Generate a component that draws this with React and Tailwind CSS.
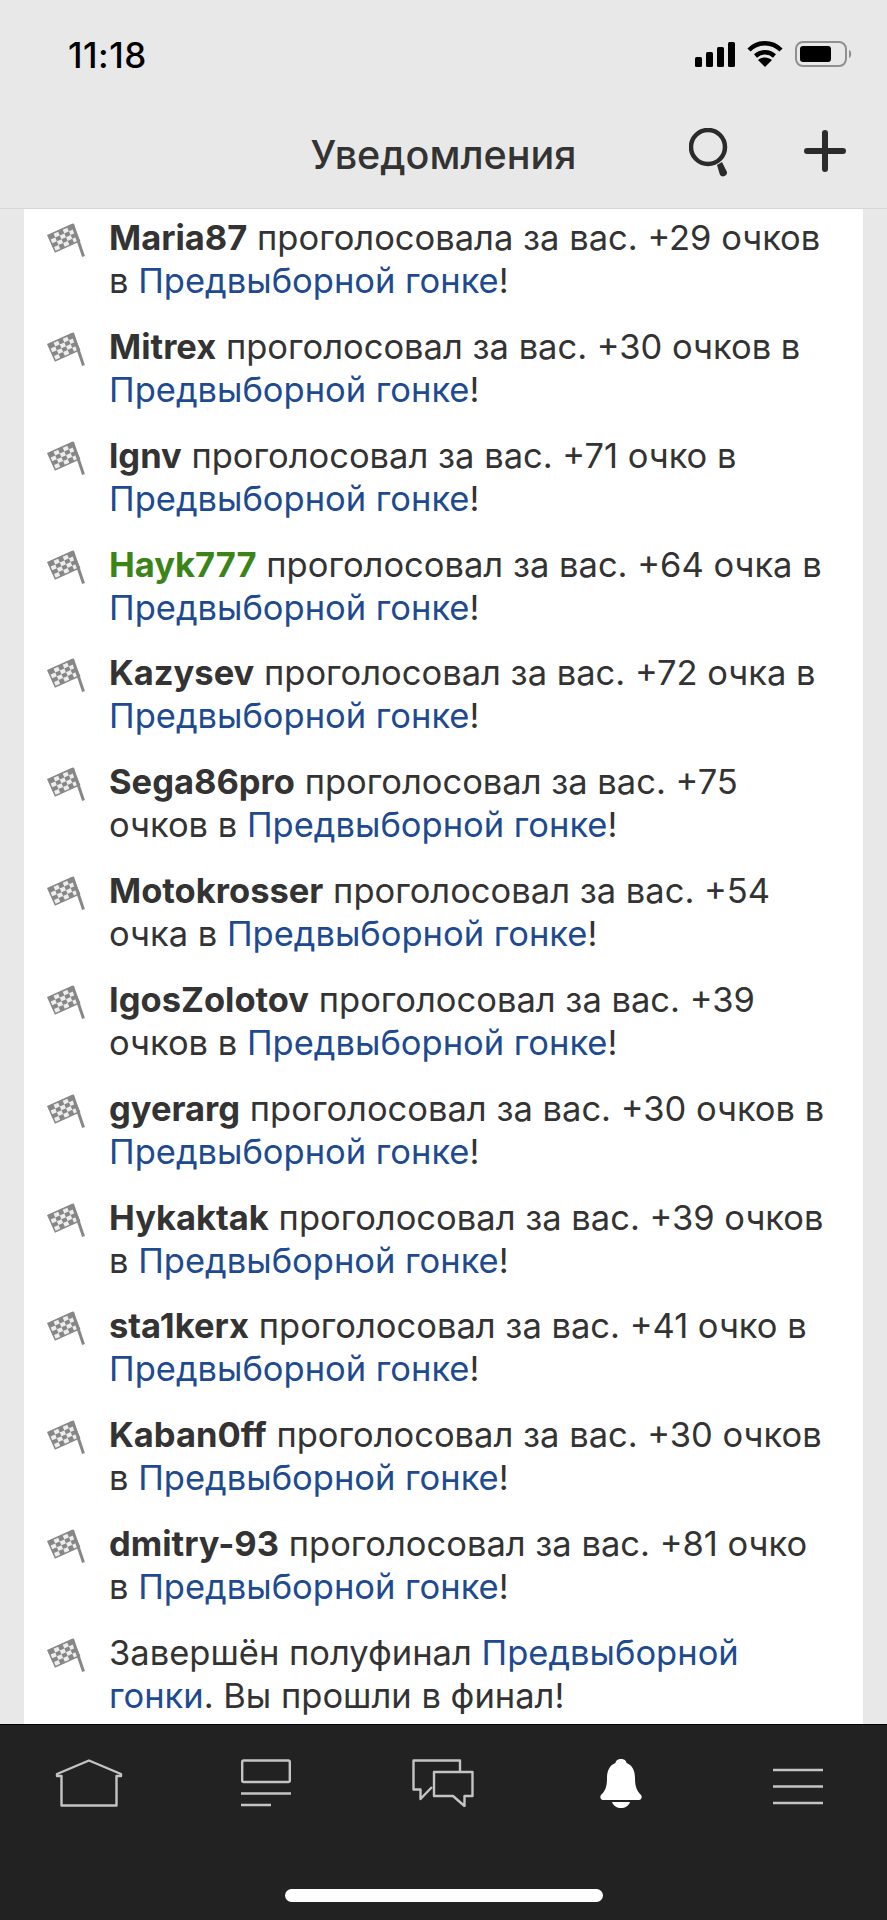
import React from "react";

const rows = [
  { name: "Maria87", text: " проголосовала за вас. +29 очков в " },
  { name: "Mitrex", text: " проголосовал за вас. +30 очков в " },
  { name: "lgnv", text: " проголосовал за вас. +71 очко в " },
  { name: "Hayk777", text: " проголосовал за вас. +64 очка в ", green: true },
  { name: "Kazysev", text: " проголосовал за вас. +72 очка в " },
  { name: "Sega86pro", text: " проголосовал за вас. +75 очков в " },
  { name: "Motokrosser", text: " проголосовал за вас. +54 очка в " },
  { name: "IgosZolotov", text: " проголосовал за вас. +39 очков в " },
  { name: "gyerarg", text: " проголосовал за вас. +30 очков в " },
  { name: "Hykaktak", text: " проголосовал за вас. +39 очков в " },
  { name: "sta1kerx", text: " проголосовал за вас. +41 очко в " },
  { name: "Kaban0ff", text: " проголосовал за вас. +30 очков в " },
  { name: "dmitry-93", text: " проголосовал за вас. +81 очко в " },
];

const Flag = () => {
  const cells = [];
  for (let y = 0; y < 4; y++) {
    for (let x = 0; x < 5; x++) {
      if ((x + y) % 2 === 1) {
        cells.push(<rect key={x + "-" + y} x={1.5 + x * 5} y={1.5 + y * 4.1} width="5" height="4.1" fill="#fff" opacity="0.85" />);
      }
    }
  }
  return (
    <svg width="38" height="36" viewBox="0 0 38 36" className="shrink-0">
      <g transform="translate(0 12) rotate(-24)">
        <rect x="0" y="0" width="28" height="19.4" fill="#878787" />
        {cells}
      </g>
      <path d="M25.500 1 L36.500 33.500" stroke="#878787" strokeWidth="3" fill="none" />
    </svg>
  );
};

const Row = ({ children }) => (
  <div className="flex h-[108.85px] shrink-0 pl-[23px]">
    <div className="w-[62px] shrink-0 pt-[7px]">
      <Flag />
    </div>
    <p className="w-[723px] text-[34.5px] leading-[43px] text-[#333333]">{children}</p>
  </div>
);

const Search = () => (
  <svg width="40" height="50" viewBox="0 0 40 50">
    <circle cx="19" cy="19" r="17" stroke="#2b2b2b" strokeWidth="4.5" fill="none" />
    <path d="M28 37 L33 34 L38 44 A4 4 0 0 1 31 47 Z" fill="#2b2b2b" />
  </svg>
);

const Plus = () => (
  <svg width="42" height="42" viewBox="0 0 42 42">
    <path d="M21 3 V39 M3 21 H39" stroke="#2b2b2b" strokeWidth="6" strokeLinecap="round" />
  </svg>
);

const StatusIcons = () => (
  <div className="flex items-center gap-[12px]">
    <svg width="40" height="25" viewBox="0 0 40 25" fill="#000">
      <rect x="0" y="15" width="7" height="10" rx="1.5" />
      <rect x="11" y="10" width="7" height="15" rx="1.5" />
      <rect x="22" y="5" width="7" height="20" rx="1.5" />
      <rect x="33" y="0" width="7" height="25" rx="1.5" />
    </svg>
    <svg width="36" height="26" viewBox="0 0 36 26" fill="none" stroke="#000" strokeWidth="4.4">
      <path d="M2 9 C11 0 25 0 34 9" />
      <path d="M8.5 15 C14 10 22 10 27.5 15" />
      <path d="M18 26 L11 19 C15 15.500 21 15.500 25 19 Z" fill="#000" stroke="none" />
    </svg>
    <svg width="58" height="26" viewBox="0 0 58 26">
      <rect x="1" y="1" width="50" height="24" rx="7" fill="none" stroke="#8f8f8f" strokeWidth="2" />
      <rect x="5" y="5" width="31" height="16" rx="3" fill="#000" />
      <path d="M54 9 C57 10 57 16 54 17 Z" fill="#8f8f8f" />
    </svg>
  </div>
);

const Home = () => (
  <svg width="68" height="48" viewBox="0 0 68 48" fill="none" stroke="#c4c4c4" strokeWidth="2.400" strokeLinejoin="round">
    <path d="M34 1.500 L66 15 V17 H61.500 V46.500 H6.500 V17 H2 V15 Z" />
  </svg>
);

const News = () => (
  <svg width="50" height="48" viewBox="0 0 50 48" fill="none" stroke="#c4c4c4" strokeWidth="2.400" strokeLinejoin="round">
    <rect x="1.200" y="1.500" width="47.600" height="21.500" rx="1.500" />
    <path d="M0 34.500 H50 M0 46 H30" />
  </svg>
);

const Chat = () => (
  <svg width="62" height="48" viewBox="0 0 62 48" fill="none" stroke="#c4c4c4" strokeWidth="2.400" strokeLinejoin="round">
    <path d="M48 12 V1.500 H1.500 V30.500 H8.500 V40 L20 28" />
    <path d="M22 13 H60.500 V37 H52.500 V47 L41 37 H22 Z" />
  </svg>
);

const Bell = () => (
  <svg width="42" height="49" viewBox="0 0 42 49" fill="#fff">
    <path d="M21 0 C25 0 26.500 2.500 26.500 4 C32.500 6 35 12 35 19 C35 28 37 32 41 36 C42.500 38 41.500 41 39 41 H3 C0.500 41 -0.500 38 1 36 C5 32 7 28 7 19 C7 12 9.500 6 15.500 4 C15.500 2.500 17 0 21 0 Z" />
    <path d="M12 43 H30 C28.500 47 25 49 21 49 C17 49 13.500 47 12 43 Z" />
  </svg>
);

const Menu = () => (
  <svg width="50" height="37" viewBox="0 0 50 37" stroke="#c4c4c4" strokeWidth="2.600">
    <path d="M0 2 H50 M0 18.500 H50 M0 35 H50" />
  </svg>
);

const App = () => {
  return (
    <div className="flex h-[1920px] w-[887px] flex-col overflow-hidden bg-[#e8e8e8] font-['Inter',sans-serif]">
      <header className="h-[209px] shrink-0 border-b border-[#d6d6d6] bg-[#e8e8e8]">
        <div className="flex h-[108px] items-start justify-between pl-[68px] pr-[34px] pt-[41px]">
          <span className="text-[35px] font-medium leading-[28px] tracking-[0.5px] text-black">11:18</span>
          <StatusIcons />
        </div>
        <div className="relative flex h-[100px] items-center justify-center pb-[5px]">
          <h1 className="text-[39.5px] font-medium leading-none text-[#333333]">Уведомления</h1>
          <div className="absolute left-[689px] top-[20px]">
            <Search />
          </div>
          <div className="absolute left-[804px] top-[22px]">
            <Plus />
          </div>
        </div>
      </header>

      <main className="flex min-h-0 flex-1 flex-col overflow-hidden">
        <div className="mx-[24px] flex min-h-0 flex-1 flex-col overflow-hidden bg-white pt-[7px]">
          {rows.map((r) => (
            <Row key={r.name}>
              <b className={r.green ? "font-bold text-[#3b8518]" : "font-bold text-[#333333]"}>{r.name}</b>
              {r.text}
              <span className="text-[#1d4a91]">Предвыборной гонке</span>!
            </Row>
          ))}
          <Row>
            Завершён полуфинал <span className="text-[#1d4a91]">Предвыборной гонки</span>. Вы прошли в финал!
          </Row>
        </div>
      </main>

      <footer className="h-[196px] shrink-0 border-t border-black bg-[#222222]">
        <div className="grid grid-cols-5 pt-[34px]">
          <div className="flex h-[50px] justify-center"><Home /></div>
          <div className="flex h-[50px] justify-center"><News /></div>
          <div className="flex h-[50px] justify-center"><Chat /></div>
          <div className="flex h-[50px] justify-center"><Bell /></div>
          <div className="flex h-[50px] justify-center pt-[9px]"><Menu /></div>
        </div>
        <div className="mx-auto mt-[80px] h-[13px] w-[318px] rounded-full bg-white" />
      </footer>
    </div>
  );
};

export default App;
